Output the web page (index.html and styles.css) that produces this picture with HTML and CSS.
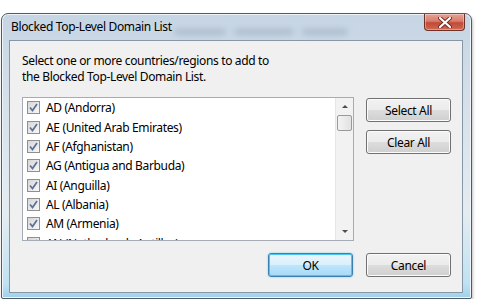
FILE: index.html
```html
<!DOCTYPE html>
<html>
	<head>
		<meta charset="utf-8">
		<title>Blocked Top-Level Domain List</title>
		<link rel="stylesheet" href="styles.css">
	</head>
	<body>
		<div class="window">
			<div class="titlebar">
				<div class="ghosts">
					<span class="ghost g1"></span>
					<span class="ghost g2"></span>
					<span class="ghost g3"></span>
				</div>
				<div class="title">Blocked Top-Level Domain List</div>
				<div class="close">
					<svg width="14" height="11" viewBox="0 0 14 11">
						<path d="M2 1 L12 10 M12 1 L2 10" stroke="#6b2a22" stroke-width="4" stroke-linecap="round"/>
						<path d="M2 1 L12 10 M12 1 L2 10" stroke="#ffffff" stroke-width="2.2" stroke-linecap="round"/>
					</svg>
				</div>
			</div>

			<div class="client">
				<p class="intro">Select one or more countries/regions to add to<br>the Blocked Top-Level Domain List.</p>

				<div class="middle">
					<div class="listbox">
						<div class="items">
							<div class="item"><span class="check"></span>AD (Andorra)</div>
							<div class="item"><span class="check"></span>AE (United Arab Emirates)</div>
							<div class="item"><span class="check"></span>AF (Afghanistan)</div>
							<div class="item"><span class="check"></span>AG (Antigua and Barbuda)</div>
							<div class="item"><span class="check"></span>AI (Anguilla)</div>
							<div class="item"><span class="check"></span>AL (Albania)</div>
							<div class="item"><span class="check"></span>AM (Armenia)</div>
							<div class="item"><span class="check"></span>AN (Netherlands Antilles)</div>
						</div>
						<div class="scrollbar">
							<div class="arrow up"></div>
							<div class="thumb"></div>
							<div class="track"></div>
							<div class="arrow down"></div>
						</div>
					</div>

					<div class="side">
						<button class="btn">Select All</button>
						<button class="btn">Clear All</button>
					</div>
				</div>

				<div class="footer">
					<button class="btn default">OK</button>
					<button class="btn">Cancel</button>
				</div>
			</div>
		</div>
	</body>
</html>
```

FILE: styles.css
```css
body {margin: 0; padding: 0; background: #ffffff; font-family: "Noto Sans", "Open Sans", sans-serif; font-size: 12px; letter-spacing: -0.35px; color: #000;}

.window {
	margin: 13px 0 0 1px; width: 471px; height: 286px; box-sizing: border-box;
	display: flex; flex-direction: column; padding: 0 8px 5px 7px;
	border: 1px solid #4f5b66; border-radius: 7px 7px 2px 2px;
	background: linear-gradient(to bottom, #c6d5e4 0%, #d9e3ec 40%, #e4ecf2 70%, #bfe2f3 95%, #9fd0ea 100%);
	box-shadow: inset 0 0 0 1px #eef4f8, 1px 2px 3px rgba(0,0,0,0.25);
}

.titlebar {position: relative; height: 26px; display: flex; align-items: flex-start;}
.title {position: relative; padding: 5px 0 0 2px; line-height: 16px; flex: 1;}

.ghosts {position: absolute; left: 165px; top: 15px; display: flex; gap: 8px;}
.ghost {height: 6px; background: #93a4b6; filter: blur(3px); opacity: 0.55; border-radius: 3px;}
.g1 {width: 52px;}
.g2 {width: 60px;}
.g3 {width: 46px;}

.close {
	position: relative; width: 41px; height: 17px; margin-right: -2px; box-sizing: border-box;
	display: flex; align-items: center; justify-content: center;
	border: 1px solid #6d3128; border-top: 0; border-radius: 0 0 4px 4px;
	background: linear-gradient(to bottom, #e6a294 0%, #d77d6c 45%, #c24a37 55%, #cf6a52 100%);
	box-shadow: inset 0 0 0 1px rgba(255,255,255,0.35);
}

.client {
	flex: 1; display: flex; flex-direction: column;
	background: #f0f0f0; border: 1px solid #8796a4;
	padding: 0 11px 15px 12px;
}

.intro {margin: 12px 0 0 0; line-height: 16px;}

.middle {display: flex; gap: 12px; margin-top: 12px;}

.listbox {display: flex; width: 333px; height: 144px; box-sizing: border-box; border: 1px solid #a5acb5; background: #ffffff; overflow: hidden;}
.items {flex: 1; padding: 0 0 0 4px;}
.item {display: flex; align-items: center; height: 19.35px; white-space: nowrap;}

.check {
	width: 11px; height: 11px; margin-right: 6px; flex: none;
	border: 1px solid #8f8f8f;
	background-image: url("data:image/svg+xml;utf8,<svg xmlns='http://www.w3.org/2000/svg' width='11' height='11'><path d='M2 5.5 L4.5 8.5 L9 2' fill='none' stroke='%235a7096' stroke-width='1.7'/></svg>"), linear-gradient(135deg, #d6d6d6, #f8f8f8);
}

.scrollbar {width: 17px; display: flex; flex-direction: column; align-items: center; background: #f2f2f2; border-left: 1px solid #e6e6e6;}
.arrow {height: 17px; width: 100%; display: flex; align-items: center; justify-content: center;}
.arrow::before {content: ""; border-left: 3px solid transparent; border-right: 3px solid transparent;}
.arrow.up::before {border-bottom: 3px solid #4d4d4d;}
.arrow.down::before {border-top: 3px solid #4d4d4d;}
.thumb {width: 13px; height: 14px; border: 1px solid #9a9a9a; border-radius: 2px; background: linear-gradient(to right, #f3f3f3, #e2e2e2);}
.track {flex: 1;}

.side {display: flex; flex-direction: column; gap: 8px; padding-top: 1px;}

.btn {
	width: 85px; height: 24px; padding: 0; font: inherit; letter-spacing: inherit; color: #000;
	border: 1px solid #707070; border-radius: 3px;
	background: linear-gradient(to bottom, #f2f2f2 0%, #ebebeb 49%, #dddddd 50%, #cfcfcf 100%);
	box-shadow: inset 0 0 0 1px #fcfcfc;
}
.btn.default {
	border-color: #3c7fb1;
	background: linear-gradient(to bottom, #eaf6fd 0%, #d9f0fc 49%, #bee6fd 50%, #a7d9f5 100%);
	box-shadow: inset 0 0 0 1px #48c7f5, 0 0 2px #7fc4ea;
}

.footer {margin-top: auto; display: flex; justify-content: flex-end; gap: 13px;}
```
